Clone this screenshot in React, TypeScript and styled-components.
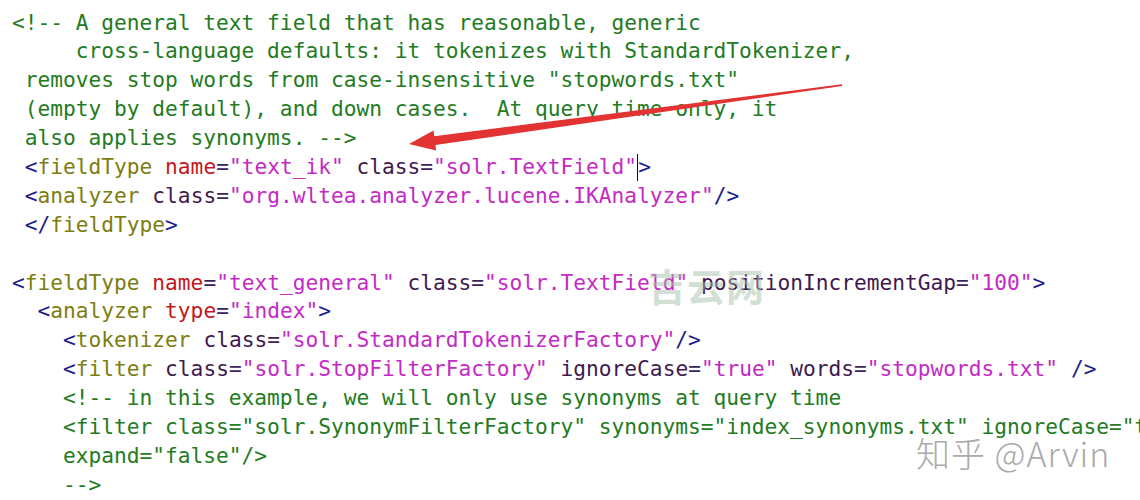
import React from 'react';
import styled, { createGlobalStyle } from 'styled-components';

type Kind = 'comment' | 'punct' | 'tag' | 'attr' | 'key' | 'eq' | 'value' | 'plain';

const palette: Record<Kind, string> = {
  comment: '#237b23',
  punct: '#1c1c8c',
  tag: '#7d7d10',
  attr: '#3f1a4f',
  key: '#c4161c',
  eq: '#3a2458',
  value: '#c42ac4',
  plain: '#222',
};

const GlobalStyle = createGlobalStyle`
  html, body {
    margin: 0;
    background: #fff;
  }
`;

const Page = styled.div`
  position: relative;
  width: 1140px;
  height: 500px;
  overflow: hidden;
  background: #fff;
`;

const Editor = styled.div`
  padding: 8.5px 0 0 12px;
  font-family: 'DejaVu Sans Mono', 'Liberation Mono', monospace;
  font-size: 21.2px;
  line-height: 28.9px;
  white-space: pre;
`;

const Line = styled.div`
  height: 28.9px;
`;

const Tok = styled.span<{ $kind: Kind }>`
  color: ${(p) => palette[p.$kind]};
`;

const Caret = styled.span`
  display: inline-block;
  width: 0;
  height: 27px;
  vertical-align: top;
  margin-top: 1px;
  border-left: 1.5px solid #111;
`;

const Arrow = styled.svg`
  position: absolute;
  left: 0;
  top: 0;
  pointer-events: none;
`;

const SiteMark = styled.div`
  position: absolute;
  left: 648px;
  top: 257px;
  font-family: 'Noto Sans CJK SC', sans-serif;
  font-weight: 700;
  font-size: 38px;
  letter-spacing: 1px;
  color: rgba(165, 192, 170, 0.5);
`;

const AuthorMark = styled.div`
  position: absolute;
  left: 916px;
  top: 428px;
  font-family: 'Noto Sans CJK SC', 'Noto Sans', sans-serif;
  font-weight: 300;
  font-size: 34px;
  letter-spacing: 1px;
  color: #aaaaaa;
  text-shadow: 0 0 2px #fff, 0 0 2px #fff;
  white-space: pre;
`;

// splits one xml line into coloured pieces; "|" marks the caret
function tokenize(src: string): [Kind | 'caret', string][] {
  const out: [Kind | 'caret', string][] = [];
  const re = /(<\/?)(\w+)|(\s+)|(\w+)(=)("[^"]*")|(\/?>)|(\|)/g;
  let m: RegExpExecArray | null;
  while ((m = re.exec(src))) {
    if (m[1]) {
      out.push(['punct', m[1]]);
      out.push(['tag', m[2]]);
    } else if (m[3]) {
      out.push(['plain', m[3]]);
    } else if (m[4]) {
      out.push([m[4] === 'name' || m[4] === 'type' ? 'key' : 'attr', m[4]]);
      out.push(['eq', '=']);
      out.push(['value', m[6]]);
    } else if (m[7]) {
      out.push(['punct', m[7]]);
    } else if (m[8]) {
      out.push(['caret', '']);
    }
  }
  return out;
}

const lines: { text: string; comment?: boolean }[] = [
  { text: '<!-- A general text field that has reasonable, generic', comment: true },
  { text: '     cross-language defaults: it tokenizes with StandardTokenizer,', comment: true },
  { text: ' removes stop words from case-insensitive "stopwords.txt"', comment: true },
  { text: ' (empty by default), and down cases.  At query time only, it', comment: true },
  { text: ' also applies synonyms. -->', comment: true },
  { text: ' <fieldType name="text_ik" class="solr.TextField"|>' },
  { text: ' <analyzer class="org.wltea.analyzer.lucene.IKAnalyzer"/>' },
  { text: ' </fieldType>' },
  { text: '' },
  { text: '<fieldType name="text_general" class="solr.TextField" positionIncrementGap="100">' },
  { text: '  <analyzer type="index">' },
  { text: '    <tokenizer class="solr.StandardTokenizerFactory"/>' },
  { text: '    <filter class="solr.StopFilterFactory" ignoreCase="true" words="stopwords.txt" />' },
  { text: '    <!-- in this example, we will only use synonyms at query time', comment: true },
  {
    text: '    <filter class="solr.SynonymFilterFactory" synonyms="index_synonyms.txt" ignoreCase="true"',
    comment: true,
  },
  { text: '    expand="false"/>', comment: true },
  { text: '    -->', comment: true },
];

function CodeLine({ text, comment }: { text: string; comment?: boolean }) {
  if (comment) {
    return (
      <Line>
        <Tok $kind="comment">{text}</Tok>
      </Line>
    );
  }
  return (
    <Line>
      {tokenize(text).map(([kind, value], i) =>
        kind === 'caret' ? <Caret key={i} /> : (
          <Tok key={i} $kind={kind}>
            {value}
          </Tok>
        )
      )}
    </Line>
  );
}

function App() {
  return (
    <>
      <GlobalStyle />
      <Page>
        <Editor>
          {lines.map((l, i) => (
            <CodeLine key={i} text={l.text} comment={l.comment} />
          ))}
        </Editor>
        <SiteMark>吉云网</SiteMark>
        <AuthorMark>知乎 @Arvin</AuthorMark>
        <Arrow width={1140} height={500} viewBox="0 0 1140 500">
          <polygon
            points="409,144 433.5,130.6 434.2,136.3 842,84.2 842,86 435.4,145 436.1,150.4"
            fill="#e23232"
          />
        </Arrow>
      </Page>
    </>
  );
}

export default App;
